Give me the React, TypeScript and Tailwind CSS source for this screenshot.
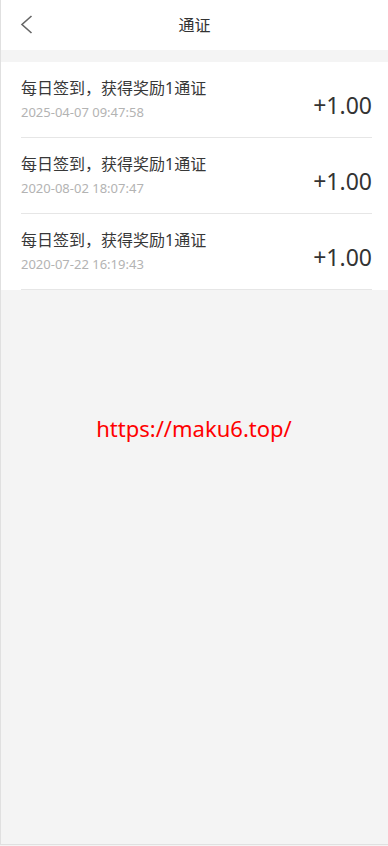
import React from "react";

const items = [
  { title: "每日签到，获得奖励1通证", date: "2025-04-07 09:47:58", amount: "+1.00" },
  { title: "每日签到，获得奖励1通证", date: "2020-08-02 18:07:47", amount: "+1.00" },
  { title: "每日签到，获得奖励1通证", date: "2020-07-22 16:19:43", amount: "+1.00" },
];

export default function App() {
  return (
    <div
      className="relative w-[388px] h-[846px] overflow-hidden bg-[#f4f4f4]"
      style={{ fontFamily: '"Noto Sans", "Noto Sans CJK SC", sans-serif' }}
    >
      <div className="h-[845px] border-l border-b border-[#e0e0e0] bg-[#f4f4f4] flex flex-col">
        <div className="h-[50px] bg-white flex items-center relative shrink-0">
          <svg
            className="absolute left-[19px] top-[15px]"
            width="14"
            height="19"
            viewBox="0 0 14 19"
            fill="none"
          >
            <path d="M11.5 1 L2 9.5 L11.5 18" stroke="#666" strokeWidth="1.6" />
          </svg>
          <div className="w-full text-center text-[16px] text-[#333]">通证</div>
        </div>
        <div className="h-[12px] shrink-0" />
        <div className="bg-white">
          {items.map((it, i) => (
            <div
              key={i}
              className="ml-[20px] mr-[16px] h-[76px] border-b border-[#e6e6e6] flex items-start justify-between pt-[15px]"
            >
              <div className="flex flex-col">
                <div className="text-[16px] leading-[22px] text-[#383838]">{it.title}</div>
                <div className="text-[13px] leading-[18px] mt-[4px] text-[#b3b3b3]">{it.date}</div>
              </div>
              <div className="text-[23px] leading-[28px] mt-[14px] text-[#333]">{it.amount}</div>
            </div>
          ))}
        </div>
      </div>
      <div className="absolute left-0 right-0 top-[412px] text-center text-[22px] leading-[32px] text-[#ff0000]">
        https://maku6.top/
      </div>
    </div>
  );
}
